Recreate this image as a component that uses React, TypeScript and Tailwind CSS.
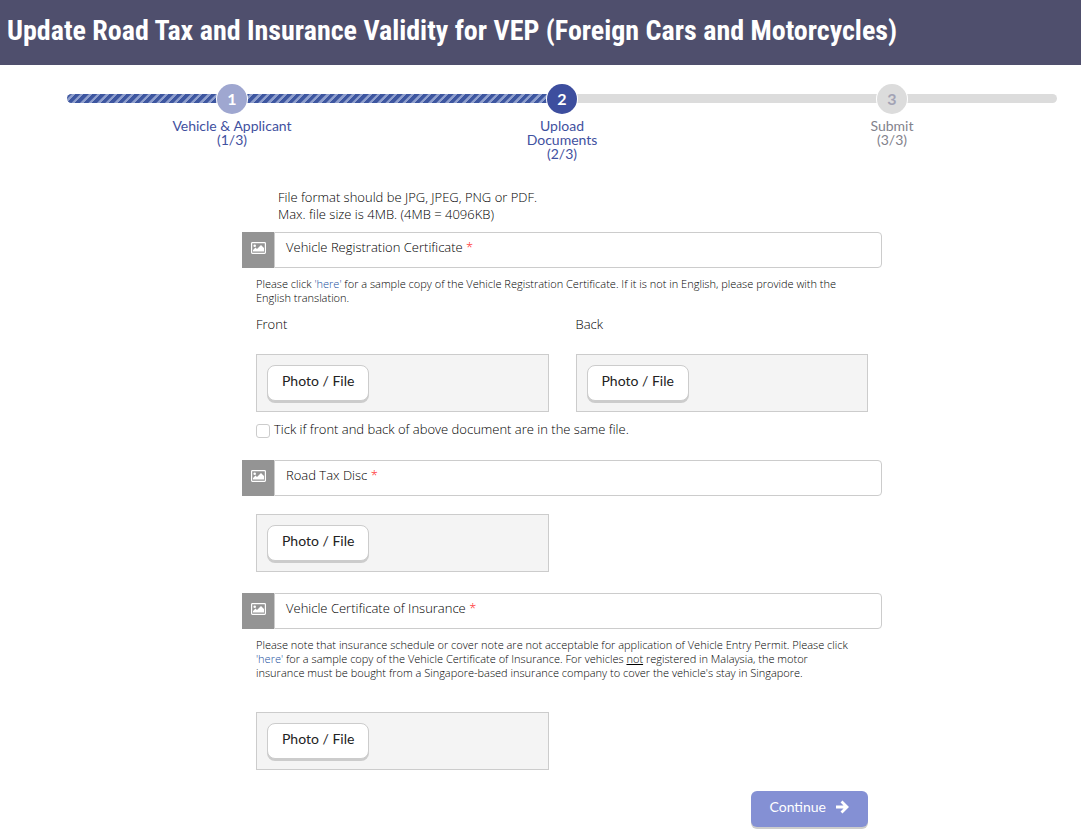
import type { ReactNode } from "react";

const steps = [
  {
    id: 1,
    lines: ["Vehicle & Applicant", "(1/3)"],
    circle: "bg-[#9fa7d0] text-white",
    text: "text-[#3f51a0]",
  },
  {
    id: 2,
    lines: ["Upload", "Documents", "(2/3)"],
    circle: "bg-[#3d4e9e] text-white",
    text: "text-[#3f51a0]",
  },
  {
    id: 3,
    lines: ["Submit", "(3/3)"],
    circle: "bg-[#dcdcdc] text-[#a3a3b5]",
    text: "text-[#82828c]",
  },
];

const PictureIcon = () => (
  <svg viewBox="0 0 15 12" className="h-3 w-[15px]" aria-hidden="true">
    <rect x="0.6" y="0.6" width="13.8" height="10.8" rx="0.8" fill="none" stroke="#fff" strokeWidth="1.2" />
    <circle cx="3.7" cy="3.7" r="1.3" fill="#fff" />
    <path d="M2 9.5V8l2.5-2.5L6 7l4-4 3 3v3.5z" fill="#fff" />
  </svg>
);

const ArrowIcon = () => (
  <svg viewBox="0 0 14 14" className="size-[14px]" fill="none" stroke="#fff" strokeWidth="2.8" aria-hidden="true">
    <path d="M1 7h11M6.5 1.5 12 7l-5.5 5.5" />
  </svg>
);

const Stepper = () => (
  <div className="relative">
    <div className="absolute inset-x-0 top-[10px] h-[9px] overflow-hidden rounded-full bg-[#dcdcdc]">
      <div className="h-full w-1/2 bg-[repeating-linear-gradient(135deg,#3d56a0_0_3px,#8f9fcd_4px_6px)]" />
    </div>
    <ol className="relative grid grid-cols-3 font-['Lato',sans-serif] font-normal">
      {steps.map((step) => (
        <li key={step.id} className={`flex flex-col items-center text-center text-sm leading-[14px] ${step.text}`}>
          <span
            className={`mb-[5px] flex size-[30px] items-center justify-center rounded-full text-base font-bold ring-1 ring-white ${step.circle}`}
          >
            {step.id}
          </span>
          {step.lines.map((line) => (
            <span key={line}>{line}</span>
          ))}
        </li>
      ))}
    </ol>
  </div>
);

const FieldTitle = ({ children }: { children: ReactNode }) => (
  <div className="flex h-9">
    <div className="flex w-8 items-center justify-center bg-[#949494] pb-1">
      <PictureIcon />
    </div>
    <h2 className="flex-1 rounded-r border border-[#ccc] px-[11px] pt-[5px] leading-[18px]">
      {children} <span className="text-[#ff1f1f]">*</span>
    </h2>
  </div>
);

const UploadBox = ({ label }: { label: string }) => (
  <div className="flex h-[58px] items-start border border-[#ccc] bg-[#f4f4f4] p-[10px]">
    <button
      type="button"
      aria-label={label}
      className="h-9 rounded-lg border border-[#ccc] bg-white px-[14px] pb-1 font-['Lato',sans-serif] text-sm font-normal text-[#222] shadow-[0_2px_0_#ccc]"
    >
      Photo / File
    </button>
  </div>
);

const Note = ({ children }: { children: ReactNode }) => (
  <p className="pt-[9px] pr-7 pl-[14px] text-[11px] leading-[14px]">{children}</p>
);

const SampleLink = () => (
  <a href="#sample" className="text-[#1a4f9e]">
    'here'
  </a>
);

export default function App() {
  return (
    <div className="bg-white font-['Open_Sans',sans-serif] text-[13px] font-light text-black">
      <header className="bg-[#4f4f6d] px-[7px] pt-[10px] pb-[14px]">
        <h1 className="font-['Liberation_Sans_Narrow','Roboto_Condensed',sans-serif] text-[28px] leading-[41px] font-bold text-white">
          Update Road Tax and Insurance Validity for VEP (Foreign Cars and Motorcycles)
        </h1>
      </header>

      <main className="pt-[19px] pr-6 pb-2 pl-[67px]">
        <Stepper />

        <form className="mx-auto mt-7 max-w-[640px]">
          <p className="mb-[9px] pl-9 leading-[17px]">
            File format should be JPG, JPEG, PNG or PDF.
            <br />
            Max. file size is 4MB. (4MB = 4096KB)
          </p>

          <section>
            <FieldTitle>Vehicle Registration Certificate</FieldTitle>
            <Note>
              Please click <SampleLink /> for a sample copy of the Vehicle Registration Certificate. If it is not in
              English, please provide with the English translation.
            </Note>
            <div className="mt-[10px] grid grid-cols-2 gap-[27px] px-[14px]">
              <div>
                <h3 className="mb-[21px] leading-[18px]">Front</h3>
                <UploadBox label="Photo / File, front" />
              </div>
              <div>
                <h3 className="mb-[21px] leading-[18px]">Back</h3>
                <UploadBox label="Photo / File, back" />
              </div>
            </div>
            <label className="mt-2 flex items-start gap-1 px-[14px] leading-[18px]">
              <input
                type="checkbox"
                className="mt-1 size-[14px] appearance-none rounded-[3px] border border-[#ccc] bg-white checked:bg-[#3d4e9e]"
              />
              Tick if front and back of above document are in the same file.
            </label>
          </section>

          <section className="mt-[22px]">
            <FieldTitle>Road Tax Disc</FieldTitle>
            <div className="mt-[18px] grid grid-cols-2 gap-[27px] px-[14px]">
              <UploadBox label="Photo / File, road tax disc" />
            </div>
          </section>

          <section className="mt-[21px]">
            <FieldTitle>Vehicle Certificate of Insurance</FieldTitle>
            <Note>
              Please note that insurance schedule or cover note are not acceptable for application of Vehicle Entry
              Permit. Please click <SampleLink /> for a sample copy of the Vehicle Certificate of Insurance. For
              vehicles <u>not</u> registered in Malaysia, the motor insurance must be bought from a Singapore-based
              insurance company to cover the vehicle's stay in Singapore.
            </Note>
            <div className="mt-8 grid grid-cols-2 gap-[27px] px-[14px]">
              <UploadBox label="Photo / File, insurance" />
            </div>
          </section>

          <div className="mt-[21px] flex justify-end px-[14px]">
            <button
              type="submit"
              className="flex h-9 items-center gap-[9px] rounded-md bg-[#8490d4] px-[19px] pb-1 font-['Lato',sans-serif] text-sm font-normal text-white shadow-[0_2px_0_#ccc]"
            >
              Continue
              <ArrowIcon />
            </button>
          </div>
        </form>
      </main>
    </div>
  );
}
